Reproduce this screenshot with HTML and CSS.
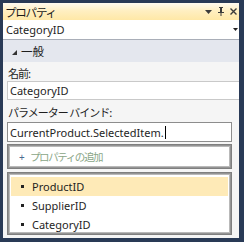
FILE: index.html
```html
<!DOCTYPE html>
<html>
<head>
<meta charset="utf-8">
<link rel="stylesheet" href="styles.css">
</head>
<body>
<div class="panel">
  <div class="titlebar">
    <span class="title">プロパティ</span>
    <span class="tools">
      <svg class="ico" width="7" height="4" viewBox="0 0 7 4"><path d="M0 0h7L3.5 4z" fill="#3b3b3b"/></svg>
      <svg class="ico" width="8" height="9" viewBox="0 0 8 9"><path d="M2 0h4v1H5v4h2v1H4.5v3h-1V6H1V5h2V1H2z" fill="#3b3b3b"/></svg>
      <svg class="ico" width="7" height="7" viewBox="0 0 7 7"><path d="M0.5 0.5l6 6M6.5 0.5l-6 6" stroke="#3b3b3b" stroke-width="1.4"/></svg>
    </span>
  </div>
  <div class="combo">
    <span>CategoryID</span>
    <svg class="ico" width="5" height="3" viewBox="0 0 5 3"><path d="M0 0h5L2.5 3z" fill="#222"/></svg>
  </div>
  <div class="category">
    <svg class="cat-ico" width="5" height="5" viewBox="0 0 5 5"><path d="M5 0v5H0z" fill="#333"/></svg>
    <span>一般</span>
  </div>
  <div class="props">
    <div class="label">名前:</div>
    <div class="textbox wide">CategoryID</div>
    <div class="label second">パラメーター バインド:</div>
    <div class="textbox focus">CurrentProduct.SelectedItem.<span class="caret"></span></div>
    <div class="box add"><span class="plus">+</span><span class="addtext">プロパティの追加</span></div>
    <div class="box list">
      <div class="row sel"><span class="dot"></span>ProductID</div>
      <div class="row"><span class="dot"></span>SupplierID</div>
      <div class="row"><span class="dot"></span>CategoryID</div>
    </div>
  </div>
</div>
</body>
</html>
```

FILE: styles.css
```css
html, body {
  margin: 0;
  padding: 0;
}
body {
  width: 244px;
  height: 242px;
  background: #293a56;
  font-family: "Noto Sans", "Noto Sans CJK JP", sans-serif;
  font-size: 11px;
  color: #1e1e1e;
  overflow: hidden;
  padding: 3px 5px 0 3px;
  box-sizing: border-box;
}
.panel {
  width: 236px;
  height: 235px;
  background: #f5f5f5;
  display: flex;
  flex-direction: column;
  overflow: hidden;
}
.titlebar {
  height: 17px;
  flex: none;
  background: linear-gradient(#fffbf0, #ffefc2 45%, #ffe8a6);
  display: flex;
  align-items: center;
  justify-content: space-between;
  padding: 0 2px 0 2px;
}
.title {
  font-family: "Noto Sans CJK JP", sans-serif;
  font-size: 11.5px;
  letter-spacing: -1.2px;
  color: #1a1a1a;
}
.tools {
  display: flex;
  align-items: center;
  gap: 5px;
}
.combo {
  height: 19px;
  flex: none;
  background: #fff;
  border-bottom: 1px solid #a9aeb8;
  display: flex;
  align-items: center;
  justify-content: space-between;
  padding: 0 1px 0 3px;
}
.category {
  height: 22px;
  flex: none;
  background: #e4e7ee;
  display: flex;
  align-items: center;
  padding-left: 9px;
  gap: 4px;
  font-family: "Noto Sans CJK JP", sans-serif;
  font-size: 11.5px;
}
.cat-ico {
  margin-top: 2px;
}
.props {
  padding: 4px 0 0 4px;
  display: flex;
  flex-direction: column;
}
.label {
  height: 15px;
  line-height: 15px;
  padding-left: 1px;
  font-family: "Noto Sans CJK JP", sans-serif;
  font-size: 11px;
  letter-spacing: -1px;
}
.label.second {
  margin-top: 4px;
  height: 18px;
  line-height: 16px;
}
.textbox {
  height: 19px;
  box-sizing: border-box;
  background: #fff;
  border: 1px solid #c9c9c9;
  display: flex;
  align-items: center;
  padding-left: 2px;
}
.textbox.wide {
  margin-right: -4px;
  border-right: none;
}
.textbox.focus {
  height: 20px;
  width: 225px;
  border-color: #8d8d8d;
}
.caret {
  display: inline-block;
  width: 1px;
  height: 13px;
  background: #000;
  margin-left: 1px;
}
.box {
  width: 225px;
  box-sizing: border-box;
  background: #fff;
  border: 1px solid #7f7f7f;
  box-shadow: inset 0 0 0 1px #949494, inset 0 0 0 2px #b9b9b9;
}
.add {
  height: 25px;
  margin-top: 2px;
  display: flex;
  align-items: center;
  padding-left: 11px;
}
.plus {
  color: #4b6b8f;
  font-size: 10px;
  width: 11px;
}
.addtext {
  font-family: "Noto Sans CJK JP", sans-serif;
  font-size: 10.5px;
  letter-spacing: -1.4px;
  color: #8aa687;
}
.list {
  height: 63px;
  margin-top: 3px;
  padding: 4px 3px 0 3px;
}
.row {
  height: 19px;
  display: flex;
  align-items: center;
  padding-left: 10px;
}
.row.sel {
  background: #feeab7;
}
.dot {
  width: 3px;
  height: 3px;
  background: #222;
  margin-right: 8px;
}
```
